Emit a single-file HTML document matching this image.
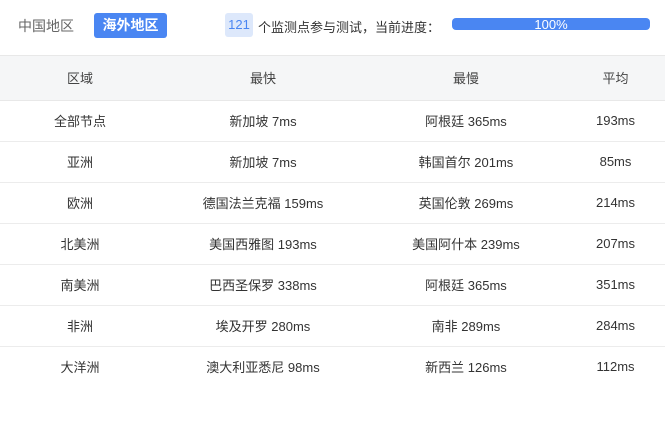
<!DOCTYPE html>
<html><head><meta charset="utf-8"><style>
*{margin:0;padding:0;box-sizing:border-box}
body{width:665px;height:424px;background:#fff;font-family:"Liberation Sans","Noto Sans CJK SC",sans-serif;font-size:13px;color:#333;position:relative;overflow:hidden}
.a{position:absolute;white-space:nowrap}
table{position:absolute;top:55px;left:0;width:665px;border-collapse:collapse}
th{height:45px;background:#f5f6f7;font-weight:normal;color:#444;border-top:1px solid #e8e8e8;border-bottom:1px solid #e8e8e8;padding-bottom:1px}
td{height:41px;text-align:center;border-bottom:1px solid #ececec;color:#333;padding-bottom:2px}
tr:last-child td{border-bottom:none}
</style></head><body>
<div class="a" style="left:18px;top:16px;font-size:14px;color:#666">中国地区</div>
<div class="a" style="left:94px;top:13px;width:73px;height:25px;background:#4a86f2;border-radius:3px;color:#fff;font-size:14px;text-align:center;line-height:24px;font-weight:bold">海外地区</div>
<div class="a" style="left:225px;top:13px;width:28px;height:24px;background:#dde8fb;border-radius:3px;color:#4a86f2;text-align:center;line-height:24px">121</div>
<div class="a" style="left:258px;top:17px;color:#333">个监测点参与测试，当前进度：</div>
<div class="a" style="left:452px;top:18px;width:198px;height:12px;background:#4a86f2;border-radius:4px;color:#fff;font-size:13px;text-align:center;line-height:13px">100%</div>
<table>
<colgroup><col style="width:160px"><col style="width:206px"><col style="width:200px"><col style="width:99px"></colgroup>
<tr><th>区域</th><th>最快</th><th>最慢</th><th>平均</th></tr>
<tr><td>全部节点</td><td>新加坡 7ms</td><td>阿根廷 365ms</td><td>193ms</td></tr>
<tr><td>亚洲</td><td>新加坡 7ms</td><td>韩国首尔 201ms</td><td>85ms</td></tr>
<tr><td>欧洲</td><td>德国法兰克福 159ms</td><td>英国伦敦 269ms</td><td>214ms</td></tr>
<tr><td>北美洲</td><td>美国西雅图 193ms</td><td>美国阿什本 239ms</td><td>207ms</td></tr>
<tr><td>南美洲</td><td>巴西圣保罗 338ms</td><td>阿根廷 365ms</td><td>351ms</td></tr>
<tr><td>非洲</td><td>埃及开罗 280ms</td><td>南非 289ms</td><td>284ms</td></tr>
<tr><td>大洋洲</td><td>澳大利亚悉尼 98ms</td><td>新西兰 126ms</td><td>112ms</td></tr>
</table>
</body></html>
